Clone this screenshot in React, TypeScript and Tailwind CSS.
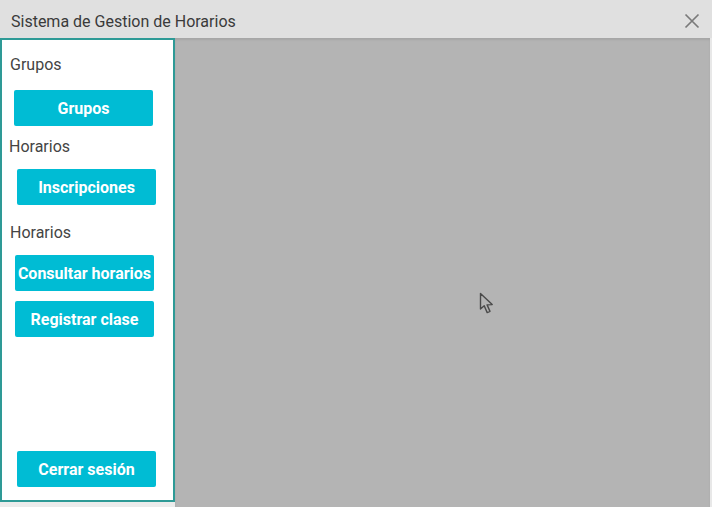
const font = { fontFamily: 'Roboto, "Liberation Sans", sans-serif' }

function NavButton({ label, className }: { label: string; className: string }) {
  return (
    <button
      className={`h-[36px] w-[139px] pt-[2px] rounded-[2px] bg-[#00bcd4] text-[16px] font-bold text-white leading-none ${className}`}
    >
      {label}
    </button>
  )
}

export default function App() {
  return (
    <div className="w-[712px] h-[507px] overflow-hidden bg-[#ececec] flex flex-col" style={font}>
      {/* Title bar */}
      <div className="h-[38px] shrink-0 bg-[#e0e0e0] flex items-center justify-between pl-[11px] pr-[12px] pt-[5px]">
        <span className="text-[16px] text-[#3a3a3a]">Sistema de Gestion de Horarios</span>
        <svg width="16" height="16" viewBox="0 0 16 16" className="mt-[-1px]">
          <path d="M1.5 1.5 L14.5 14.5 M14.5 1.5 L1.5 14.5" stroke="#7a7a7a" strokeWidth="1.7" />
        </svg>
      </div>

      <div className="flex flex-1 min-h-0">
        {/* Sidebar */}
        <div className="w-[175px] h-[464px] shrink-0 bg-white border-2 border-[#2e9a96] flex flex-col items-start">
          <span className="mt-[15px] ml-[8px] text-[16px] leading-[19px] text-[#444]">Grupos</span>
          <NavButton label="Grupos" className="mt-[16px] ml-[12px]" />
          <span className="mt-[11px] ml-[7px] text-[16px] leading-[19px] text-[#444]">Horarios</span>
          <NavButton label="Inscripciones" className="mt-[13px] ml-[15px]" />
          <span className="mt-[18px] ml-[8px] text-[16px] leading-[19px] text-[#444]">Horarios</span>
          <NavButton label="Consultar horarios" className="mt-[13px] ml-[13px]" />
          <NavButton label="Registrar clase" className="mt-[10px] ml-[13px]" />
          <NavButton label="Cerrar sesión" className="mt-auto mb-[13px] ml-[15px]" />
        </div>

        {/* Content area */}
        <div className="flex-1 flex pr-[2px] bg-[#e8e8e8]">
          <div className="flex-1 relative bg-[#b4b4b4] shadow-[inset_0_2px_2px_rgba(0,0,0,0.08)]">
            <svg
              className="absolute left-[304px] top-[254px]"
              width="16"
              height="23"
              viewBox="0 0 16 23"
            >
              <path
                d="M1.5 1.5 L1.5 17 L5.2 13.8 L8.2 20.6 L11 19.4 L8.1 12.9 L13.2 12.6 Z"
                fill="#b4b4b4"
                stroke="#4a4a4a"
                strokeWidth="1.4"
                strokeLinejoin="round"
              />
            </svg>
          </div>
        </div>
      </div>
    </div>
  )
}
